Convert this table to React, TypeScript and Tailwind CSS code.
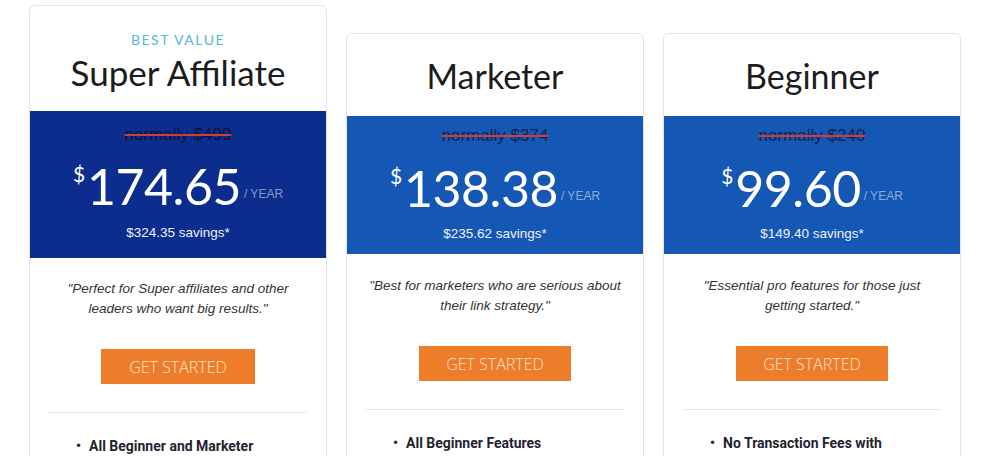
import { ReactNode } from "react"

type Plan = {
    title: string
    badge?: string
    normally: string
    price: string
    savings: string
    quote: ReactNode
    feature: string
    featured?: boolean
}

const plans: Plan[] = [
    {
        title: "Super Affiliate",
        badge: "BEST VALUE",
        normally: "normally $499",
        price: "174.65",
        savings: "$324.35 savings*",
        quote: "\"Perfect for Super affiliates and other leaders who want big results.\"",
        feature: "All Beginner and Marketer",
        featured: true,
    },
    {
        title: "Marketer",
        normally: "normally $374",
        price: "138.38",
        savings: "$235.62 savings*",
        quote: "\"Best for marketers who are serious about their link strategy.\"",
        feature: "All Beginner Features",
    },
    {
        title: "Beginner",
        normally: "normally $240",
        price: "99.60",
        savings: "$149.40 savings*",
        quote: "\"Essential pro features for those just getting started.\"",
        feature: "No Transaction Fees with",
    },
]

const PlanCard = ({ plan }: { plan: Plan }) => {
    const f = plan.featured

    return <div className={`w-[298px] shrink-0 rounded-md border border-[#e2e5ee] bg-white ${f ? "mt-[5px]" : "mt-[33px]"}`}>
        <div className={`flex flex-col items-center ${f ? "pt-[26px] pb-[17px]" : "pt-[20px] pb-[18px]"}`}>
            {plan.badge && <span className="font-['Lato',sans-serif] text-[14px] leading-[16px] tracking-[1.5px] text-[#52b9dc]">{plan.badge}</span>}
            <h2 className={`font-['Lato',sans-serif] leading-[44px] text-[#1c1c1c] ${f ? "mt-[2px] text-[35px]" : "text-[34px]"}`}>{plan.title}</h2>
        </div>
        <div className={`flex flex-col items-center text-white ${f ? "bg-[#0c2d8d] pt-[14px] pb-[15px]" : "bg-[#1557b4] pt-[10px] pb-[10px]"}`}>
            <span className={`font-['Liberation_Sans',Arial,sans-serif] text-[17px] leading-[20px] line-through decoration-[#d23b3b] decoration-[1.5px] ${f ? "text-[#0a1233]" : "text-[#16224d]"}`}>{plan.normally}</span>
            <div className={`flex h-[56px] items-start ${f ? "mt-[13px]" : "mt-[14px]"}`}>
                <span className="font-['Lato',sans-serif] text-[21px] leading-[22px] mt-[5px] mr-[2px]">$</span>
                <span className="font-['Lato',sans-serif] text-[50px] leading-[56px] tracking-[-0.5px]">{plan.price}</span>
                <span className="self-end mb-[13px] ml-[3px] font-['Liberation_Sans',Arial,sans-serif] text-[12px] leading-[14px] text-white/50">/ YEAR</span>
            </div>
            <span className={`font-['Liberation_Sans',Arial,sans-serif] text-[13.5px] leading-[20px] text-[#eef2fc] ${f ? "mt-[9px]" : "mt-[8px]"}`}>{plan.savings}</span>
        </div>
        <div className="flex flex-col items-center px-[18px]">
            <p className={`text-center font-['Liberation_Sans',Arial,sans-serif] italic text-[13.5px] leading-[20px] text-[#333] ${f ? "pt-[21px]" : "pt-[22px]"}`}>{plan.quote}</p>
            <button className={`mt-[30px] h-[35px] bg-[#ee7d2b] font-['Open_Sans',sans-serif] font-light text-[16px] text-[#fde4cf] ${f ? "w-[154px]" : "w-[152px]"}`}>GET STARTED</button>
        </div>
        <div className="mx-[19px] mt-[28px] border-t border-[#e5e7eb]" />
        <ul className="pl-[46px] pr-[20px] pt-[24px] pb-[20px]">
            <li className="flex items-start gap-[8px] font-['Roboto',sans-serif] font-bold text-[14px] leading-[18px] text-[#1f2430]">
                <span className="text-[14px]">•</span>
                <span>{plan.feature}</span>
            </li>
        </ul>
    </div>
}

export default function App() {
    return <div className="flex h-[456px] w-[981px] items-start gap-[19px] overflow-hidden bg-white pl-[29px]">
        {plans.map(p => <PlanCard key={p.title} plan={p} />)}
    </div>
}
